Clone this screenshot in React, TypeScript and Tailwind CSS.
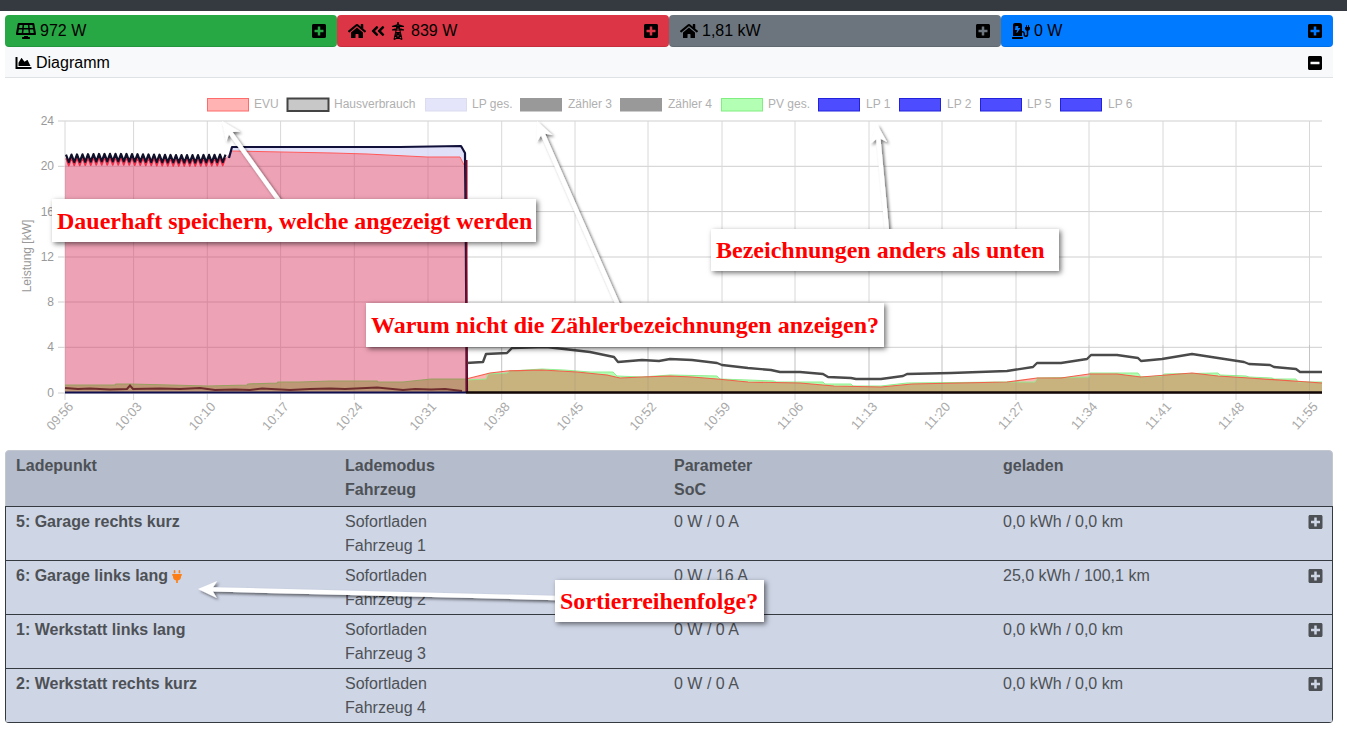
import {
  FaAngleDoubleLeft,
  FaChargingStation,
  FaChartArea,
  FaHome,
  FaMinusSquare,
  FaPlug,
  FaPlusSquare,
  FaSolarPanel,
} from "react-icons/fa";

type Pt = [number, number];

const line = (pts: Pt[]) => pts.map((p, i) => `${i ? "L" : "M"}${p[0]} ${p[1]}`).join(" ");
const area = (pts: Pt[]) => `${line(pts)} L${pts[pts.length - 1][0]} 393 L${pts[0][0]} 393 Z`;

const wave = (offset: number): Pt[] => {
  const pts: Pt[] = [];
  let i = 0;
  for (let x = 66; x < 228; x += 2.75) {
    const swell = Math.sin(x / 24) * 0.6;
    pts.push([x, (i % 2 ? 162 : 154.5) + offset + swell]);
    i++;
  }
  return pts;
};

// white arrow from tail to tip, shaft plus a notched head
const arrow = (tail: Pt, tip: Pt) => {
  const dx = tip[0] - tail[0];
  const dy = tip[1] - tail[1];
  const len = Math.hypot(dx, dy);
  const ux = dx / len;
  const uy = dy / len;
  const at = (back: number, side: number): Pt => [tip[0] - ux * back - uy * side, tip[1] - uy * back + ux * side];
  return `${line([
    tail,
    at(len, 2.2),
    at(15, 2.2),
    at(19, 8.5),
    tip,
    at(19, -8.5),
    at(15, -2.2),
    at(len, -2.2),
  ])} Z`;
};

const housePts: Pt[] = [
  [466, 363], [483, 362], [486, 354], [507, 353], [512, 348], [546, 347], [564, 349], [590, 352],
  [614, 357], [618, 362], [642, 360], [659, 361], [670, 359], [692, 360], [717, 363], [722, 365],
  [748, 368], [771, 370], [780, 372], [800, 372], [823, 374], [828, 377], [851, 378], [856, 379],
  [881, 379], [903, 376], [907, 374], [951, 373], [1007, 371], [1033, 367], [1037, 363], [1061, 363],
  [1087, 359], [1091, 355], [1117, 355], [1138, 358], [1141, 361], [1162, 359], [1192, 354], [1218, 358],
  [1244, 362], [1249, 364], [1270, 365], [1274, 367], [1296, 369], [1300, 372], [1322, 372],
];

const evuRight: Pt[] = [
  [466, 379], [490, 373], [507, 371], [542, 370], [577, 372], [607, 375], [620, 378], [642, 377],
  [670, 376], [692, 377], [717, 379], [748, 382], [800, 383], [834, 386], [881, 387], [912, 384],
  [1007, 382], [1037, 378], [1061, 378], [1089, 374], [1117, 374], [1141, 377], [1192, 373], [1218, 376],
  [1249, 378], [1322, 383],
];

const pvRight: Pt[] = [
  [466, 380], [486, 379], [488, 374], [507, 373], [510, 371], [542, 369], [564, 370], [590, 372],
  [613, 372], [617, 376], [642, 377], [670, 375], [717, 376], [720, 379], [748, 380], [774, 381],
  [776, 382], [823, 382], [825, 384], [851, 384], [853, 386], [881, 386], [907, 383], [1007, 382],
  [1035, 382], [1037, 378], [1089, 377], [1090, 373], [1138, 373], [1141, 377], [1162, 376], [1164, 374],
  [1218, 373], [1220, 375], [1246, 376], [1249, 377], [1272, 378], [1274, 379], [1296, 379], [1298, 382],
  [1322, 382],
];

const pvLeft: Pt[] = [
  [65, 385], [115, 385], [116, 384], [130, 384], [170, 385], [208, 386], [247, 385], [248, 384], [277, 383],
  [278, 382], [300, 382], [330, 381], [377, 381], [378, 382], [403, 382], [431, 379], [466, 379],
];

const houseLeft: Pt[] = [
  [65, 388], [78, 389], [90, 388.5], [110, 389.5], [127, 389], [130, 385.5], [133, 389], [160, 388.5],
  [180, 389], [200, 388], [215, 390], [235, 389.5], [250, 390], [262, 388.5], [290, 390], [310, 389],
  [330, 388.5], [345, 389], [377, 387.5], [403, 390], [415, 389], [431, 389.5], [445, 389], [462, 391],
];

const evuUpper: Pt[] = [[230, 153], [232, 151], [333, 153], [367, 154], [427, 157], [460, 157], [464, 165]];
const evuTop: Pt[] = [[65, 166], ...wave(3.5), ...evuUpper, [466, 393]];

const lpTop: Pt[] = [[229, 158], [232, 147], [290, 147], [400, 147], [461, 146], [465, 153], [467, 393]];

const gridY = [121, 166.3, 211.6, 257, 302, 347.3, 393];
const yLabels = ["24", "20", "16", "12", "8", "4", "0"];
const gridX = [65, 133.6, 207.3, 280.6, 354.3, 428, 501.7, 575, 648, 722, 795, 869, 942, 1016, 1089, 1163, 1236, 1309.5];
const xLabels = [
  "09:56", "10:03", "10:10", "10:17", "10:24", "10:31", "10:38", "10:45", "10:52",
  "10:59", "11:06", "11:13", "11:20", "11:27", "11:34", "11:41", "11:48", "11:55",
];

const legend = [
  { x: 207, tx: 254, label: "EVU", fill: "#ffb3b3", stroke: "#ff6b6b" },
  { x: 287, tx: 334, label: "Hausverbrauch", fill: "#c8c8c8", stroke: "#444" },
  { x: 425, tx: 472, label: "LP ges.", fill: "#e4e4fa", stroke: "#dcdcf0" },
  { x: 520, tx: 568, label: "Zähler 3", fill: "#999", stroke: "#999" },
  { x: 620, tx: 668, label: "Zähler 4", fill: "#999", stroke: "#999" },
  { x: 721, tx: 768, label: "PV ges.", fill: "#b3ffb3", stroke: "#80ee80" },
  { x: 818, tx: 866, label: "LP 1", fill: "#4d4dff", stroke: "#2222dd" },
  { x: 899, tx: 947, label: "LP 2", fill: "#4d4dff", stroke: "#2222dd" },
  { x: 980, tx: 1027, label: "LP 5", fill: "#4d4dff", stroke: "#2222dd" },
  { x: 1060, tx: 1108, label: "LP 6", fill: "#4d4dff", stroke: "#2222dd" },
];

const rows = [
  { name: "5: Garage rechts kurz", car: "Fahrzeug 1", param: "0 W / 0 A", charged: "0,0 kWh / 0,0 km" },
  { name: "6: Garage links lang", car: "Fahrzeug 2", param: "0 W / 16 A", charged: "25,0 kWh / 100,1 km", plug: true },
  { name: "1: Werkstatt links lang", car: "Fahrzeug 3", param: "0 W / 0 A", charged: "0,0 kWh / 0,0 km" },
  { name: "2: Werkstatt rechts kurz", car: "Fahrzeug 4", param: "0 W / 0 A", charged: "0,0 kWh / 0,0 km" },
];

const arrows = [
  arrow([280, 202], [222, 121]),
  arrow([618, 305], [537, 121]),
  arrow([887, 231], [877, 124]),
  arrow([557, 598], [198, 589]),
];

function Pylon() {
  return (
    <svg width="14" height="18" viewBox="0 0 14 18" fill="none" stroke="black" strokeWidth="1.1">
      <path d="M7 0 L3 17.5 M7 0 L11 17.5 M5 5 H9 M1 4.5 L7 2.5 L13 4.5 M1 4.5 H13 M1 8 L7 6 L13 8 M1 8 H13 M4.5 10.5 H9.5 M3.5 14 H10.5 M4.5 10.5 L10.5 14 M9.5 10.5 L3.5 14 M3.5 14 L11 17.5 M10.5 14 L3 17.5" />
    </svg>
  );
}

function StatCard({ color, children }: { color: string; children: React.ReactNode }) {
  return (
    <div className={`flex h-8 w-[332px] items-center justify-between rounded-[4px] border-b border-black/10 pl-[11px] pr-[11px] ${color}`}>
      <div className="flex items-center text-black">{children}</div>
      <FaPlusSquare className="h-4 w-[14px]" />
    </div>
  );
}

function Chart() {
  return (
    <svg viewBox="5 78 1328 372" className="block h-[372px] w-[1328px]" fontFamily="'Liberation Sans', sans-serif">
      {legend.map((l) => (
        <g key={l.label}>
          <rect x={l.x + 0.5} y={98.5} width={41} height={12.5} fill={l.fill} stroke={l.stroke} strokeWidth={l.label === "Hausverbrauch" ? 2 : 1} />
          <text x={l.tx} y={108} fontSize="12" fill="#b0b0b0">{l.label}</text>
        </g>
      ))}

      {gridY.map((y, i) => (
        <g key={y}>
          <line x1={58} x2={1322} y1={y} y2={y} stroke="#cfcfcf" />
          <text x={54} y={y + 4} fontSize="12" textAnchor="end" fill="#999">{yLabels[i]}</text>
        </g>
      ))}
      {gridX.map((x, i) => (
        <g key={x}>
          <line x1={x} x2={x} y1={121} y2={400} stroke="#d8d8d8" />
          <text x={x + 9} y={407} fontSize="13" textAnchor="end" fill="#aaa" transform={`rotate(-48 ${x + 9} 407)`}>{xLabels[i]}</text>
        </g>
      ))}
      <text x={0} y={0} fontSize="12" textAnchor="middle" fill="#999" transform="translate(31 256) rotate(-90)">Leistung [kW]</text>

      <defs>
        <clipPath id="pv-right"><path d={area(pvRight)} /></clipPath>
      </defs>

      {/* LP ges, only the strip above EVU */}
      <path d={`${line(lpTop.slice(0, -1))} L464 165 ${[...evuUpper].reverse().map((p) => `L${p[0]} ${p[1]}`).join(" ")} Z`} fill="#d8d8f8" fillOpacity="0.8" />

      {/* EVU */}
      <path d={`${line(evuTop)} L65 393 Z`} fill="#dc3c64" fillOpacity="0.48" />
      <path d={line(wave(3.5))} fill="none" stroke="#f03048" strokeWidth="1.6" strokeLinejoin="round" />
      <path d={line(evuUpper)} fill="none" stroke="#ff5a5a" strokeWidth="1" />

      {/* PV / EVU left part */}
      <path d={area(pvLeft)} fill="#a09050" fillOpacity="0.62" />
      <path d={line(pvLeft)} fill="none" stroke="#98a060" strokeWidth="1.2" />

      {/* right of 10:34 */}
      <path d={area(pvRight)} fill="#b3ffb3" />
      <path d={area(evuRight)} fill="#ffb3b3" />
      <path d={area(evuRight)} fill="#c8b27e" clipPath="url(#pv-right)" />
      <path d={line(pvRight)} fill="none" stroke="#90ee90" strokeWidth="1" />
      <path d={line(evuRight)} fill="none" stroke="#f0604a" strokeWidth="1.2" />
      {gridX.slice(6).map((x) => (
        <line key={x} x1={x} x2={x} y1={345} y2={393} stroke="#777" strokeOpacity="0.2" />
      ))}

      {/* Hausverbrauch */}
      <path d={line(wave(0))} fill="none" stroke="#10102a" strokeWidth="2.2" strokeLinejoin="round" />
      <path d={line(lpTop)} fill="none" stroke="#10103a" strokeWidth="2.2" strokeLinejoin="round" />
      <path d={line(houseLeft)} fill="none" stroke="#6e2c2c" strokeWidth="2" />
      <path d={line(housePts)} fill="none" stroke="#4a4a4a" strokeWidth="2.4" strokeLinejoin="round" />
      <line x1={466.5} x2={466.5} y1={160} y2={393} stroke="#7a0a2a" strokeWidth="2" />
      <line x1={65} x2={466} y1={392.5} y2={392.5} stroke="#101050" strokeWidth="2" />
      <line x1={466} x2={1322} y1={392.5} y2={392.5} stroke="#120606" strokeWidth="2.5" />
    </svg>
  );
}

export default function App() {
  return (
    <div className="relative h-[732px] overflow-hidden bg-white font-['Liberation_Sans',sans-serif] text-base">
      <div className="h-[11px] bg-[#343a40]" />

      <div className="ml-[5px] mt-1 w-[1328px]">
        <div className="flex">
          <StatCard color="bg-[#28a745] text-black">
            <FaSolarPanel className="mr-1 h-4 w-5" />
            <span>972 W</span>
          </StatCard>
          <StatCard color="bg-[#dc3545]">
            <FaHome className="mr-[5px] h-4 w-[18px]" />
            <FaAngleDoubleLeft className="mr-[6px] h-4 w-[14px]" />
            <Pylon />
            <span className="ml-[6px]">839 W</span>
          </StatCard>
          <StatCard color="bg-[#6c757d]">
            <FaHome className="mr-1 h-4 w-[18px]" />
            <span>1,81 kW</span>
          </StatCard>
          <StatCard color="bg-[#007bff]">
            <FaChargingStation className="mr-1 h-4 w-[18px]" />
            <span>0 W</span>
          </StatCard>
        </div>

        {/* Diagramm */}
        <div className="flex h-[31px] items-center justify-between border-b border-[#dfe2e5] bg-[#f8f9fa] pl-[10px] pr-[11px] pt-px text-black">
          <div className="flex items-center">
            <FaChartArea className="mr-1 h-4 w-[17px]" />
            <span>Diagramm</span>
          </div>
          <FaMinusSquare className="h-4 w-[14px]" />
        </div>
        <div className="h-[372px] bg-white">
          <Chart />
        </div>

        {/* Ladepunkte */}
        <div className="overflow-hidden rounded-[4px] border-b border-[#343a40] text-[#4d5156]">
          <div className="grid h-[56px] grid-cols-4 rounded-t-[4px] border border-b-0 border-[#c3c7cf] bg-[#b5bccb] pl-[10px] pt-[3px] font-bold leading-6">
            <div>Ladepunkt</div>
            <div>Lademodus<br />Fahrzeug</div>
            <div>Parameter<br />SoC</div>
            <div>geladen</div>
          </div>
          <div className="border-x border-[#343a40] bg-[#ced5e5]">
            {rows.map((r) => (
              <div key={r.name} className="relative grid h-[54px] grid-cols-4 border-t border-[#343a40] pl-[10px] pt-[3px] leading-6">
                <div className="flex h-6 items-center font-bold">
                  {r.name}
                  {r.plug && <FaPlug className="ml-1 h-[13px] w-[10px] text-[#fd7e14]" />}
                </div>
                <div>Sofortladen<br />{r.car}</div>
                <div>{r.param}</div>
                <div>{r.charged}</div>
                <FaPlusSquare className="absolute right-[9px] top-[7px] h-4 w-[15px]" />
              </div>
            ))}
          </div>
        </div>
      </div>

      {/* annotations */}
      <svg className="pointer-events-none absolute left-0 top-0 h-[732px] w-[1347px]" viewBox="0 0 1347 732">
        <defs>
          <filter id="arrow-shadow" x="-30%" y="-30%" width="160%" height="160%">
            <feDropShadow dx="2" dy="2" stdDeviation="1.5" floodColor="#000" floodOpacity="0.55" />
          </filter>
        </defs>
        {arrows.map((d) => (
          <path key={d} d={d} fill="#fff" filter="url(#arrow-shadow)" />
        ))}
      </svg>
      <Note className="left-[52px] top-[199px] h-[43px] w-[484px]">Dauerhaft speichern, welche angezeigt werden</Note>
      <Note className="left-[711px] top-[229px] h-[42px] w-[348px]">Bezeichnungen anders als unten</Note>
      <Note className="left-[366px] top-[303px] h-[44px] w-[518px]">Warum nicht die Zählerbezeichnungen anzeigen?</Note>
      <Note className="left-[555px] top-[580px] h-[42px] w-[209px]">Sortierreihenfolge?</Note>
    </div>
  );
}

function Note({ className, children }: { className: string; children: React.ReactNode }) {
  return (
    <div className={`absolute flex items-center bg-white pl-[5px] font-['Liberation_Serif',serif] text-2xl font-bold whitespace-nowrap text-[#ff0000] shadow-[2px_2px_5px_rgba(0,0,0,0.55)] ${className}`}>
      {children}
    </div>
  );
}
